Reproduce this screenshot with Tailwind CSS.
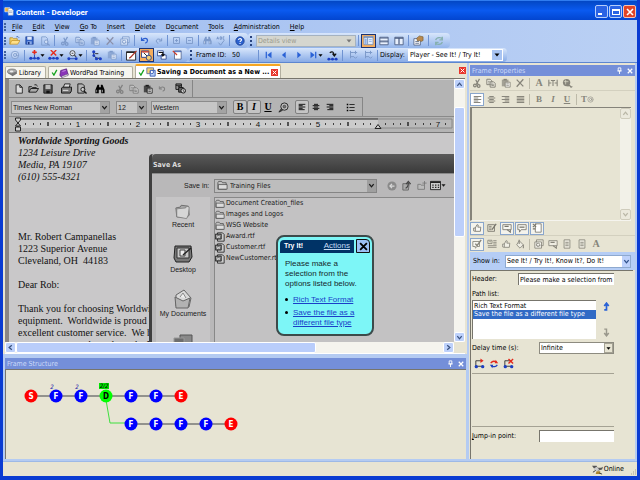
<!DOCTYPE html>
<html lang="en">
<head>
    <meta charset="UTF-8">
    <meta name="viewport" content="width=device-width, initial-scale=1.0">
    <title>Content - Developer</title>
    <script src="https://cdn.jsdelivr.net/npm/@tailwindcss/browser@4"></script>
</head>
<body class="h-screen flex flex-col overflow-hidden border-x-3 border-b-4 border-[#0a3bd2] bg-[#b4cbf2] font-['DejaVu_Sans_Condensed','DejaVu_Sans',sans-serif] text-[7px] leading-[10px] text-black">

    <!-- icon sprite -->
    <svg class="hidden" xmlns="http://www.w3.org/2000/svg">
        <symbol id="folder-open" viewBox="0 0 12 12"><path d="M1 10V3h3l1 1h4v2" fill="#f5d36b" stroke="#b58a1e" stroke-width=".8"/><path d="M1 10l2-4h9l-2.500 4z" fill="#ffe08a" stroke="#c29227" stroke-width=".8"/><path d="M8 2q2-1 3 1" fill="none" stroke="#3b66b5"/></symbol>
        <symbol id="save" viewBox="0 0 12 12"><path d="M1 1h10v10H1z" fill="#2f5fc4" stroke="#1b3c8c" stroke-width=".8"/><path d="M3 1h6v4H3z" fill="#dfe9fb"/><path d="M3 7h6v4H3z" fill="#8aa9e6"/><path d="M4 8h2v3H4z" fill="#16307a"/></symbol>
        <symbol id="find-doc" viewBox="0 0 12 12"><path d="M2 1h5l2 2v8H2z" fill="none" stroke="currentColor"/><circle cx="7.500" cy="7" r="2.200" fill="#ffffff60" stroke="currentColor"/><path d="M9 9l2.500 2.500" stroke="currentColor" stroke-width="1.500"/></symbol>
        <symbol id="cut" viewBox="0 0 12 12"><g fill="none" stroke="currentColor" stroke-width="1.500"><path d="M9 1L5 8M4.500 2l3 6"/><circle cx="3.500" cy="9" r="1.600"/><circle cx="8" cy="9.500" r="1.600"/></g></symbol>
        <symbol id="copy" viewBox="0 0 12 12"><g fill="#ffffff50" stroke="currentColor" stroke-width="1.200"><path d="M1 1.500h4l2 2v4.500H1z"/><path d="M5 4.500h4l2 2v4.500H5z"/></g><path d="M6.500 7.500h3M6.500 9h3M2.500 4h2M2.500 6h2" stroke="currentColor"/></symbol>
        <symbol id="paste" viewBox="0 0 12 12"><path d="M1 2h8v8H1z" fill="currentColor" opacity=".7"/><path d="M3 1h4v2H3z" fill="currentColor"/><path d="M5 5h6v6H5z" fill="#ffffffb0" stroke="currentColor"/><path d="M6.500 7h3M6.500 9h3" stroke="currentColor" stroke-width=".7"/></symbol>
        <symbol id="cross" viewBox="0 0 12 12"><path d="M2 2l8 8M10 1.500L2 10.500" fill="none" stroke="currentColor" stroke-width="1.500"/></symbol>
        <symbol id="stack" viewBox="0 0 12 12"><path d="M3 1h8v7H3z" fill="#ffffff40" stroke="currentColor"/><path d="M1 3.500h8v7.500H1z" fill="#ffffff80" stroke="currentColor"/><circle cx="5" cy="7" r="2" fill="none" stroke="currentColor"/></symbol>
        <symbol id="undo" viewBox="0 0 12 12"><path d="M2 2v4h4" fill="none" stroke="currentColor" stroke-width="1.500"/><path d="M2.500 5.500C5 2 10 2.500 10 6c0 2-1.500 3-3 3.500" fill="none" stroke="currentColor" stroke-width="1.600"/></symbol>
        <symbol id="redo" viewBox="0 0 12 12"><path d="M10 2v4H6M9.500 5.500C7 2 2 2.500 2 6c0 2 1.500 3 3 3.500" fill="none" stroke="currentColor" stroke-width="1.500"/></symbol>
        <symbol id="plus-box" viewBox="0 0 12 12"><path d="M2 2h8v8H2zM4 6h4M6 4v4" fill="none" stroke="currentColor" stroke-width="1.200"/></symbol>
        <symbol id="minus-box" viewBox="0 0 12 12"><path d="M2 2h8v8H2zM4 6h4" fill="none" stroke="currentColor" stroke-width="1.200"/></symbol>
        <symbol id="binoculars" viewBox="0 0 12 12"><path d="M3 1h2v3h2V1h2l2.500 6v4H7.500V7h-3v4H.5V7z" fill="currentColor"/><path d="M2 7v3M9 7v3" stroke="#fff" stroke-width=".6"/></symbol>
        <symbol id="spelling" viewBox="0 0 12 12"><path d="M1 4l1-3 1 3M1.300 3h1.500M5 1v3h1.500V1zM10 1H8.500v3H10M3 8l2.500 3L10 5" fill="none" stroke="currentColor" stroke-width="1.200"/></symbol>
        <symbol id="help" viewBox="0 0 12 12"><circle cx="6" cy="6" r="5" fill="#2c62cf" stroke="#1b3f94"/><path d="M4.300 4.800C4.300 2.500 8 2.700 7.800 4.800 7.600 6 6 6 6 7.300M6 8.500v1.200" fill="none" stroke="#fff" stroke-width="1.300"/></symbol>
        <symbol id="pane-left" viewBox="0 0 12 12"><path d="M1 1.500h10v9H1z" fill="#e6effc" stroke="#8094b8"/><path d="M1 2.500h10" stroke="#5f7fb8"/><path d="M5 2v8" stroke="#8094b8"/><path d="M2 4h2v6H2z" fill="#8db0e8"/><path d="M6.500 5h3M6.500 7h3" stroke="#8db0e8"/></symbol>
        <symbol id="pane-rows" viewBox="0 0 12 12"><path d="M1 1.500h10v9H1z" fill="#e8f0fc" stroke="#46587e"/><path d="M1 2.500h10M1 6h10M1 7h10" stroke="#46587e"/></symbol>
        <symbol id="pane-cols" viewBox="0 0 12 12"><path d="M1 1.500h10v9H1z" fill="#e8f0fc" stroke="#46587e"/><path d="M1 2.500h10M6 2v8" stroke="#46587e" stroke-width="1.400"/></symbol>
        <symbol id="properties" viewBox="0 0 12 12"><path d="M1 4h7v7H1z" fill="#fff" stroke="#5b6b8c"/><path d="M2.500 7h4M2.500 9h4" stroke="#5b6b8c"/><path d="M4 3.500L7 1l4 1v4l-2 1-2-1-2 .5z" fill="#b98a4e" stroke="#6f5326" stroke-width=".6"/></symbol>
        <symbol id="refresh" viewBox="0 0 12 12"><path d="M2 5c1-4 7-4 8-1M10 1v3.500H6.500M10 7c-1 4-7 4-8 1M2 11V7.500h3.500" fill="none" stroke="currentColor" stroke-width="1.500"/></symbol>
        <symbol id="globe" viewBox="0 0 12 12"><circle cx="6" cy="6" r="4.500" fill="#ffffff40" stroke="currentColor"/><circle cx="6" cy="6" r="1.800" fill="none" stroke="currentColor"/><path d="M8 4v3q1 1 2-1" fill="none" stroke="currentColor"/></symbol>
        <symbol id="node-add" viewBox="0 0 12 12"><path d="M6 0v5M3.500 2.500h5" stroke="#e62b1b" stroke-width="1.800"/><path d="M2 9h8M6 5v3" stroke="#2346b5"/><circle cx="2" cy="9" r="1.700" fill="#1c3fc2"/><circle cx="6" cy="9" r="1.400" fill="#1c3fc2"/><circle cx="10" cy="9" r="1.700" fill="#1c3fc2"/></symbol>
        <symbol id="node-del" viewBox="0 0 12 12"><path d="M3 0l6 6M9 0L3 6" stroke="#e62b1b" stroke-width="1.500"/><path d="M2 9h8" stroke="#2346b5"/><circle cx="2" cy="9" r="1.700" fill="#1c3fc2"/><circle cx="6" cy="9" r="1.400" fill="#1c3fc2"/><circle cx="10" cy="9" r="1.700" fill="#1c3fc2"/></symbol>
        <symbol id="node-find" viewBox="0 0 12 12"><circle cx="6" cy="3.500" r="2.800" fill="#e8eefb" stroke="#444"/><path d="M5 3.500h2M8 5.500l2 2" stroke="#444" stroke-width="1.200"/><path d="M1 9.500h10" stroke="#2346b5"/><circle cx="2" cy="9.500" r="1.600" fill="#1c3fc2"/><circle cx="10" cy="9.500" r="1.600" fill="#1c3fc2"/></symbol>
        <symbol id="node-branch" viewBox="0 0 12 12"><path d="M3 2v4l3 3h4M3 2l2 2h3" fill="none" stroke="#222"/><circle cx="3" cy="2" r="1.700" fill="#1c3fc2"/><circle cx="3" cy="6" r="1.500" fill="#1c3fc2"/><circle cx="6" cy="9.500" r="1.700" fill="#1c3fc2"/><circle cx="10.200" cy="9.500" r="1.700" fill="#1c3fc2"/></symbol>
        <symbol id="edit" viewBox="0 0 12 12"><path d="M.5 2h10v9H.5z" fill="#fff" stroke="#222"/><path d="M.5 2.500h10" stroke="#222" stroke-width="1.500"/><path d="M11.500 1L5 8l-1.500 1" stroke="#b03426" stroke-width="1.400"/></symbol>
        <symbol id="frame-bubble" viewBox="0 0 12 12"><path d="M.5 1h8v7h-8z" fill="#fff" stroke="#27428d"/><path d="M.5 2h8" stroke="#d33b25" stroke-width="1.500"/><path d="M3 3l5 5" stroke="#222"/><circle cx="8.500" cy="8.500" r="2.800" fill="#f3cf73" stroke="#27428d"/></symbol>
        <symbol id="frame-arrow" viewBox="0 0 12 12"><path d="M.5 1h7v6h-7zM5 6h6v5H5z" fill="#fff" stroke="#27428d"/><path d="M2 3h5v3M5.500 5L7 7l2-2" fill="none" stroke="#111" stroke-width="1.300"/></symbol>
        <symbol id="frame-page" viewBox="0 0 12 12"><path d="M3 1h8v10H3z" fill="#fff" stroke="#56688f"/><path d="M1 1l5 5" stroke="#d33b25" stroke-width="1.500"/><path d="M3 2h8" stroke="#2b55b5"/></symbol>
        <symbol id="nav-first" viewBox="0 0 12 12"><path d="M2 2h1.500v8H2zM9 2v8L4 6z" fill="#2a62d6"/></symbol>
        <symbol id="nav-prev" viewBox="0 0 12 12"><path d="M8 2v8L3.500 6z" fill="#2a62d6"/></symbol>
        <symbol id="nav-next" viewBox="0 0 12 12"><path d="M4 2v8l4.500-4z" fill="#2a62d6"/></symbol>
        <symbol id="nav-last" viewBox="0 0 12 12"><path d="M8.500 2H10v8H8.500zM3 2v8l5-4z" fill="#2a62d6"/></symbol>
        <symbol id="node-jump" viewBox="0 0 12 12"><path d="M3 3q4-3 5 3M6 4l2 2.500L10 4" fill="none" stroke="#111" stroke-width="1.300"/><path d="M1 10h10" stroke="#2346b5"/><circle cx="2" cy="10" r="1.500" fill="#1c3fc2"/><circle cx="6" cy="10" r="1.500" fill="#1c3fc2"/><circle cx="10" cy="10" r="1.500" fill="#1c3fc2"/></symbol>
        <symbol id="tree" viewBox="0 0 12 12"><path d="M3 1v9M3 3h4M3 8h4M9 1v4M7 3h4M7 8l2 2 2-2" fill="none" stroke="currentColor" stroke-width="1.200"/></symbol>
        <symbol id="disk" viewBox="0 0 12 12"><ellipse cx="5.500" cy="5" rx="5" ry="2.800" fill="#aaa" stroke="#555" stroke-width=".6"/><path d="M1 6l5 4 5-3-1-2-5 2z" fill="#777"/><ellipse cx="5" cy="4.700" rx="2" ry="1" fill="#eee"/></symbol>
        <symbol id="online" viewBox="0 0 12 12"><path d="M0 2h5l1 2h4l2-1-1 3-4 1-4-1z" fill="#555"/><path d="M2 5l3-2 3 3-4 2z" fill="#ccc"/><path d="M5 8h4v3H4z" fill="#a9852f"/><path d="M1 9l3-2M8 10l3 1" stroke="#333"/></symbol>
        <symbol id="book" viewBox="0 0 12 12"><path d="M2 3l7-2 2 7-8 3-2-2z" fill="#8a35b8" stroke="#4b1673" stroke-width=".8"/><path d="M3 10l8-3v2l-7 2.500z" fill="#d9e8d5" stroke="#4b1673" stroke-width=".5"/><path d="M4 4l4-1" stroke="#d9a4f0"/></symbol>
        <symbol id="topic" viewBox="0 0 12 12"><path d="M1 1h8v7H1z" fill="#f5d274" stroke="#5a6e9c"/><path d="M5 4h6v7H5z" fill="#b9d1f7" stroke="#2a4fae"/><circle cx="7" cy="6" r="2" fill="#fff" stroke="#2a4fae"/></symbol>
        <symbol id="app" viewBox="0 0 12 12"><path d="M1 2h6l1 5H1z" fill="#f0b23c" stroke="#fff" stroke-width=".7"/><path d="M5 3h4l2 2v6H5z" fill="#fff" stroke="#8f9db8" stroke-width=".7"/><path d="M6 6h4M6 8h4" stroke="#8f9db8"/></symbol>
        <symbol id="check" viewBox="0 0 12 12"><path d="M2 6l3 4.500L10 1.500" fill="none" stroke="#14a31f" stroke-width="2.200"/></symbol>
        <symbol id="new" viewBox="0 0 12 12"><path d="M2.500 1h4.500l3 3v7H2.500zM7 1v3h3" fill="#dcdcdc" stroke="currentColor"/></symbol>
        <symbol id="open" viewBox="0 0 12 12"><path d="M1 10V4h3l1 1h4v1M1 10l2-4h8.500L9 10zM7 2q2-1 3.500 1.500" fill="#aaa" stroke="currentColor"/></symbol>
        <symbol id="save-dark" viewBox="0 0 12 12"><path d="M1 1h10v10H1z" fill="#555" stroke="#111"/><path d="M3 1h6v5H3z" fill="#bbb"/><path d="M4 8h4v3H4z" fill="#111"/></symbol>
        <symbol id="print" viewBox="0 0 12 12"><path d="M4 1h6l-1 4H2.500z" fill="#ddd" stroke="#222"/><path d="M.5 5.500L2 4.500h9.500v4L10 11H.5z" fill="#777" stroke="#111"/><path d="M2 8h6" stroke="#eee"/></symbol>
        <symbol id="datetime" viewBox="0 0 12 12"><path d="M1 1h6v6H1z" fill="#999" stroke="#111"/><path d="M1 2.500h6M3 4h3" stroke="#111"/><path d="M4 5h5v5H4z" fill="#666" stroke="#111"/><circle cx="9" cy="8.500" r="2.500" fill="#ddd" stroke="#111"/><path d="M9 7v2h1.500" fill="none" stroke="#111" stroke-width=".7"/></symbol>
        <symbol id="palette" viewBox="0 0 12 12"><circle cx="7" cy="5" r="4" fill="#bbb" stroke="#222"/><circle cx="7" cy="5" r="1.500" fill="#777" stroke="#222" stroke-width=".6"/><path d="M4 7l-3 4 4-2" fill="#555" stroke="#222"/></symbol>
        <symbol id="al" viewBox="0 0 12 12"><path d="M1 2h10M1 4h6M1 6h10M1 8h6M1 10h9" stroke="currentColor" stroke-width="1.300"/></symbol>
        <symbol id="ac" viewBox="0 0 12 12"><path d="M3 2h6M1 4h10M3 6h6M1 8h10M3 10h6" stroke="currentColor" stroke-width="1.300"/></symbol>
        <symbol id="ar" viewBox="0 0 12 12"><path d="M1 2h10M5 4h6M1 6h10M5 8h6M2 10h9" stroke="currentColor" stroke-width="1.300"/></symbol>
        <symbol id="aj" viewBox="0 0 12 12"><path d="M1 2h10M1 4h10M1 6h10M1 8h10M1 10h10" stroke="currentColor" stroke-width="1.300"/></symbol>
        <symbol id="bullets" viewBox="0 0 12 12"><path d="M1 2h2M1 6h2M1 10h2" stroke="currentColor" stroke-width="2"/><path d="M4.500 2h7M4.500 6h7M4.500 10h7" stroke="currentColor"/></symbol>
        <symbol id="bubble-list" viewBox="0 0 12 12"><path d="M1 1.500h5v4H1zM3 3h1v1" fill="none" stroke="currentColor"/><path d="M7.500 2h4M7.500 4h4M7.500 6h4M1 8h10.500M1 10h10.500" stroke="currentColor"/></symbol>
        <symbol id="folder" viewBox="0 0 12 12"><path d="M1 10V2.500l1-1h3l1 1.500h4V10z" fill="#c4c4c4" stroke="#444" stroke-width=".8"/><path d="M1.500 10V5h9.500v5z" fill="#dcdcdc" stroke="#444" stroke-width=".8"/></symbol>
        <symbol id="rtf" viewBox="0 0 12 12"><path d="M3 1h6l2 2v8H3z" fill="#ccc" stroke="#222"/><path d="M.5 2.500h7v6h-7z" fill="#777" stroke="#222"/><path d="M2 4l1 3 1-2 1 2 1-3" fill="none" stroke="#eee" stroke-width=".8"/></symbol>
        <symbol id="back" viewBox="0 0 12 12"><circle cx="6" cy="6" r="5.500" fill="#8a8a8a"/><path d="M9 6H3.500M6 3.500L3.500 6 6 8.500" fill="none" stroke="#d8d8d8" stroke-width="1.500"/></symbol>
        <symbol id="up-folder" viewBox="0 0 12 12"><path d="M2 4h7l-1 7H2z" fill="#aaa" stroke="#555" stroke-width=".8"/><path d="M5 9q3-1 3-6M5.500 4.500L8 1.500l2.500 3" fill="none" stroke="#444" stroke-width="1.300"/></symbol>
        <symbol id="new-folder" viewBox="0 0 12 12"><path d="M1 10V4h3l1 1h4v5z" fill="#bbb" stroke="#777"/><path d="M9 0v5M6.500 2.500h5" stroke="#777"/></symbol>
        <symbol id="views" viewBox="0 0 12 12"><path d="M.5 1.500h11v9H.5z" fill="#ccc" stroke="#222"/><path d="M.5 2.500h11" stroke="#222" stroke-width="1.500"/><path d="M2.500 5.500h1.500M5.500 5.500H7M8.500 5.500H10M2.500 8h1.500M5.500 8H7M8.500 8H10" stroke="#222" stroke-width="1.400"/></symbol>
        <symbol id="big-folder" viewBox="0 0 18 18"><path d="M2 15L1 5l5-1 1-2 8 1 1 10-3 3z" fill="#aaa" stroke="#666"/><path d="M2 15V6l10-1 1-2 3 1-1 9-2 4z" fill="#d6d6d6" stroke="#777" stroke-width=".8"/></symbol>
        <symbol id="desktop" viewBox="0 0 20 18"><path d="M2 1h16l1 11-3 5H3L1 13z" fill="#777" stroke="#222"/><path d="M4 3h12v10H4z" fill="#c8c8c8" stroke="#333"/><path d="M7 5h5v6H7z" fill="#eee" stroke="#444"/><path d="M10 10l8-7" stroke="#222" stroke-width="1.500"/></symbol>
        <symbol id="documents" viewBox="0 0 18 20"><path d="M2 6l8-5 7 8-2 9-13-1z" fill="#d9d9d9" stroke="#666"/><path d="M1 8l8 4 7-3-2 10H2z" fill="#b2b2b2" stroke="#666"/><path d="M6 8l3-4 3 5" fill="#eee" stroke="#888"/></symbol>
        <symbol id="computer" viewBox="0 0 20 18"><path d="M7 1h12v10H7z" fill="#888" stroke="#555"/><path d="M1 4h10v9H1z" fill="#6d6d6d" stroke="#999"/><path d="M1 14h18v3H1z" fill="#999"/></symbol>
        <symbol id="thumb" viewBox="0 0 12 12"><path d="M2 6h2l2-4 1.500.5L7 5h3.500l-.5 5H4L2 9.500z" fill="#ffffff70" stroke="currentColor"/><path d="M4 6v4" stroke="currentColor"/></symbol>
        <symbol id="note" viewBox="0 0 12 12"><path d="M1 2h8v8H1zM2.500 4h3M2.500 6h3M2.500 8h3" fill="none" stroke="currentColor"/><path d="M11 1L6 8" stroke="currentColor" stroke-width="1.500"/></symbol>
        <symbol id="screen" viewBox="0 0 12 12"><path d="M1 2h10v6H1z" fill="#ffffff50" stroke="currentColor"/><path d="M3 4h5M6 8l4 3V8" fill="none" stroke="currentColor" stroke-width="1.300"/></symbol>
        <symbol id="bubble" viewBox="0 0 12 12"><path d="M1 2h10v6H5l-2 3V8H1z" fill="#ffffff50" stroke="currentColor"/><path d="M3 5h6" stroke="currentColor" stroke-width="1.500"/></symbol>
        <symbol id="template" viewBox="0 0 12 12"><path d="M4 1h7v10H4z" fill="#fff" stroke="currentColor"/><path d="M1 1l4 4M5 1L1 5M1 7h3" stroke="currentColor" stroke-width="1.300"/></symbol>
        <symbol id="page" viewBox="0 0 12 12"><path d="M2.500 1h7v10h-7z" fill="#ffffff50" stroke="currentColor"/><path d="M4 4h4M4 6h4M4 8h4" stroke="currentColor"/></symbol>
        <symbol id="tag" viewBox="0 0 12 12"><path d="M1 3h8v6H6l-2 2V9H1z" fill="#ffffff50" stroke="currentColor"/><path d="M11 1L6 8 4 5.500" fill="none" stroke="currentColor" stroke-width="1.700"/></symbol>
        <symbol id="bucket" viewBox="0 0 12 12"><path d="M5 2l5 5-4 4-4-4z" fill="#ffffff50" stroke="currentColor"/><path d="M10 7v4M5 1v5" stroke="currentColor" stroke-width="1.300"/></symbol>
        <symbol id="spacing" viewBox="0 0 12 12"><path d="M1 2v8M11 2v8M3.500 3h5M6 3v6.500M1 6h3M8 6h3" fill="none" stroke="currentColor" stroke-width="1.300"/></symbol>
        <symbol id="link" viewBox="0 0 12 12"><circle cx="5" cy="5" r="4" fill="currentColor"/><path d="M2 4h5M4 2v5" stroke="#e7e4d3" stroke-width=".7"/><path d="M6 9q2-2 3 0t2 0" fill="none" stroke="currentColor" stroke-width="1.500"/></symbol>
        <symbol id="caret" viewBox="0 0 6 6"><path d="M.5 1.500h5L3 4.500z" fill="currentColor"/></symbol>
        <symbol id="chev" viewBox="0 0 8 8"><path d="M1.500 2.500L4 5.500l2.500-3" fill="none" stroke="currentColor" stroke-width="1.500"/></symbol>
        <symbol id="pin" viewBox="0 0 8 8"><path d="M2.500 1h3v3.500h-3zM1.500 4.500h5M4 4.500V8" fill="none" stroke="#fff"/></symbol>
        <symbol id="close" viewBox="0 0 8 8"><path d="M1 1l6 6M7 1L1 7" stroke="currentColor" stroke-width="1.600"/></symbol>
        <symbol id="route-add" viewBox="0 0 12 12"><path d="M2 9V3h6M1 9h9" fill="none" stroke="#333"/><path d="M7 .5L10.500 3 7 5.500z" fill="#e3281b"/><circle cx="2.500" cy="9.500" r="1.800" fill="#1c3fc2"/><circle cx="9.500" cy="9.500" r="1.800" fill="#1c3fc2"/></symbol>
        <symbol id="route-swap" viewBox="0 0 12 12"><path d="M2 5q3-4 7-1" fill="none" stroke="#e3281b" stroke-width="1.500"/><path d="M10 7q-3 4-7 1" fill="none" stroke="#1c3fc2" stroke-width="1.500"/><path d="M8 1l3 4H7z" fill="#e3281b"/><path d="M4 11L1 7h4z" fill="#1c3fc2"/></symbol>
        <symbol id="route-del" viewBox="0 0 12 12"><path d="M2 9V3h6M1 9h9" fill="none" stroke="#333"/><path d="M6 1l5 5M11 1L6 6" stroke="#e3281b" stroke-width="1.500"/><circle cx="2.500" cy="9.500" r="1.800" fill="#1c3fc2"/><circle cx="9.500" cy="9.500" r="1.800" fill="#1c3fc2"/></symbol>
    </svg>

    <header class="h-5 shrink-0 -mx-[3px] pl-1 pr-1 flex items-center gap-0.5 bg-linear-to-b from-[#0347c4] via-[#0a5af0] via-50% to-[#0345cf] border-t border-[#2f7cf0]">
        <svg class="size-[10px]"><use href="#app"/></svg>
        <h1 class="flex-1 text-white text-[8px] font-bold font-['Roboto',sans-serif] pt-1">Content - Developer</h1>
        <div class="flex gap-px pt-0.5">
            <button aria-label="Minimize" class="size-[13px] rounded-xs border border-[#b5cdfa] bg-[#2a63e4] flex items-end p-0.5"><span class="w-1 h-0.5 bg-white"></span></button>
            <button aria-label="Maximize" class="size-[13px] rounded-xs border border-[#b5cdfa] bg-[#2a63e4] flex items-center justify-center"><span class="w-2 h-1.5 border border-t-2 border-white"></span></button>
            <button aria-label="Close" class="size-[13px] rounded-xs border border-[#f5c3b5] bg-[#e14427] flex items-center justify-center text-white"><svg class="size-2"><use href="#close"/></svg></button>
        </div>
    </header>

    <nav class="h-[13px] shrink-0 flex items-center gap-[10px] pl-px bg-linear-to-r from-[#a0bdf0] to-[#bad0f4]">
        <span class="h-2 border-l-2 border-dotted border-[#41619e] -mr-1"></span>
        <a href="#"><u>F</u>ile</a>
        <a href="#"><u>E</u>dit</a>
        <a href="#"><u>V</u>iew</a>
        <a href="#"><u>G</u>o To</a>
        <a href="#"><u>I</u>nsert</a>
        <a href="#"><u>D</u>elete</a>
        <a href="#">D<u>o</u>cument</a>
        <a href="#"><u>T</u>ools</a>
        <a href="#"><u>A</u>dministration</a>
        <a href="#"><u>H</u>elp</a>
    </nav>

    <div class="h-[15px] shrink-0 flex bg-linear-to-r from-[#a0bdf0] to-[#bad0f4] text-[#7d9aca]">
        <div class="flex items-center rounded-r-sm pl-px bg-linear-to-b from-[#d8e6fb] to-[#93b4ea] pr-px">
            <span class="h-2 border-l-2 border-dotted border-[#41619e] mr-px"></span>
            <button aria-label="Open" class="w-[15px] flex justify-center"><svg class="size-[11px]"><use href="#folder-open"/></svg></button>
            <button aria-label="Save" class="w-[15px] flex justify-center"><svg class="size-[9px]"><use href="#save"/></svg></button>
            <button aria-label="Preview" class="w-[15px] flex justify-center"><svg class="size-[10px]"><use href="#find-doc"/></svg></button>
            <span class="w-px h-[11px] bg-[#6f93d2] mx-0.5"></span>
            <button aria-label="Cut" class="w-[15px] flex justify-center"><svg class="size-[10px]"><use href="#cut"/></svg></button>
            <button aria-label="Copy" class="w-[15px] flex justify-center"><svg class="size-[10px]"><use href="#copy"/></svg></button>
            <button aria-label="Paste" class="w-[15px] flex justify-center"><svg class="size-[10px]"><use href="#paste"/></svg></button>
            <button aria-label="Delete" class="w-[15px] flex justify-center text-[#8b8fa8]"><svg class="size-[10px]"><use href="#cross"/></svg></button>
            <button aria-label="Details" class="w-[15px] flex justify-center"><svg class="size-[10px]"><use href="#stack"/></svg></button>
            <span class="w-px h-[11px] bg-[#6f93d2] mx-0.5"></span>
            <button aria-label="Undo" class="w-[15px] flex justify-center text-[#2c5fd0]"><svg class="size-[9px]"><use href="#undo"/></svg></button>
            <button aria-label="Redo" class="w-[13px] flex justify-center"><svg class="size-2"><use href="#redo"/></svg></button>
            <span class="w-px h-[11px] bg-[#6f93d2] mx-0.5"></span>
            <button aria-label="Expand" class="w-[13px] flex justify-center"><svg class="size-[9px]"><use href="#plus-box"/></svg></button>
            <button aria-label="Collapse" class="w-[13px] flex justify-center"><svg class="size-[9px]"><use href="#minus-box"/></svg></button>
            <span class="w-px h-[11px] bg-[#6f93d2] mx-0.5"></span>
            <button aria-label="Find" class="w-[13px] flex justify-center"><svg class="size-[9px]"><use href="#binoculars"/></svg></button>
            <button aria-label="Spelling" class="w-[13px] flex justify-center"><svg class="size-[10px]"><use href="#spelling"/></svg></button>
            <span class="w-px h-[11px] bg-[#6f93d2] mx-0.5"></span>
            <button aria-label="Help" class="w-[15px] flex justify-center"><svg class="size-[10px]"><use href="#help"/></svg></button>
        </div>
        <div class="flex items-center rounded-sm bg-linear-to-b from-[#d8e6fb] to-[#93b4ea] pl-0.5 pr-1">
            <span class="h-2.5 border-l-2 border-dotted border-[#27427e] mr-1"></span>
            <div class="relative w-[100px] h-3">
                <select aria-label="View" disabled class="appearance-none block w-full h-full pl-px bg-[#d5d6cf] border border-[#a5b2c0] text-[#9a9a8c] leading-[10px] opacity-100"><option>Details view</option></select>
                <svg class="absolute right-1 top-[3px] size-1.5 text-[#777] pointer-events-none"><use href="#caret"/></svg>
            </div>
            <span class="w-px h-[11px] bg-[#6f93d2] mx-0.5"></span>
            <button aria-label="Left pane" class="w-[15px] h-[14px] flex justify-center items-center border border-[#1d3474] bg-[#f5ad5c]"><svg class="size-[11px]"><use href="#pane-left"/></svg></button>
            <button aria-label="Rows" class="w-[15px] flex justify-center"><svg class="size-[10px]"><use href="#pane-rows"/></svg></button>
            <button aria-label="Columns" class="w-[15px] flex justify-center"><svg class="size-[10px]"><use href="#pane-cols"/></svg></button>
            <span class="w-px h-[11px] bg-[#6f93d2] mx-0.5"></span>
            <button aria-label="Properties" class="w-[15px] flex justify-center"><svg class="size-[11px]"><use href="#properties"/></svg></button>
            <span class="w-px h-[11px] bg-[#6f93d2] mx-0.5"></span>
            <button aria-label="Refresh" class="w-[15px] flex justify-center text-[#86b0ae]"><svg class="size-[10px]"><use href="#refresh"/></svg></button>
        </div>
    </div>

    <div class="h-[15px] shrink-0 flex bg-linear-to-r from-[#a0bdf0] to-[#bad0f4] border-b border-[#5d86cf] text-[#7d9aca]">
        <div class="flex items-center rounded-r-sm pl-px bg-linear-to-b from-[#d8e6fb] to-[#88abe6] pr-1">
            <span class="h-2 border-l-2 border-dotted border-[#41619e] mr-px"></span>
            <button aria-label="Publish" class="w-[15px] flex justify-center"><svg class="size-[10px]"><use href="#globe"/></svg></button>
            <span class="w-px h-[11px] bg-[#6f93d2] mx-0.5"></span>
            <button aria-label="Insert frame" class="w-[19px] flex items-center justify-center text-black"><svg class="size-[11px]"><use href="#node-add"/></svg><svg class="size-[5px]"><use href="#caret"/></svg></button>
            <button aria-label="Delete frame" class="w-[19px] flex items-center justify-center text-black"><svg class="size-[11px]"><use href="#node-del"/></svg><svg class="size-[5px]"><use href="#caret"/></svg></button>
            <button aria-label="Find frame" class="w-[19px] flex items-center justify-center text-black"><svg class="size-[11px]"><use href="#node-find"/></svg><svg class="size-[5px]"><use href="#caret"/></svg></button>
            <span class="w-px h-[11px] bg-[#6f93d2] mx-0.5"></span>
            <button aria-label="Link frames" class="w-[15px] flex justify-center"><svg class="size-[11px]"><use href="#node-branch"/></svg></button>
            <button aria-label="Recapture" class="w-[15px] flex justify-center"><svg class="size-[10px]"><use href="#paste"/></svg></button>
            <span class="w-px h-[11px] bg-[#6f93d2] mx-0.5"></span>
            <button aria-label="Edit screenshot" class="w-[15px] flex justify-center"><svg class="size-[11px]"><use href="#edit"/></svg></button>
            <button aria-label="Bubble view" class="w-[15px] h-[14px] flex justify-center items-center border border-[#1d3474] bg-[#f5ad5c]"><svg class="size-[11px]"><use href="#frame-bubble"/></svg></button>
            <button aria-label="Action view" class="w-[15px] flex justify-center"><svg class="size-[10px]"><use href="#frame-arrow"/></svg></button>
            <button aria-label="Page view" class="w-[15px] flex justify-center"><svg class="size-[10px]"><use href="#frame-page"/></svg></button>
        </div>
        <div class="flex items-center rounded-sm bg-linear-to-b from-[#d8e6fb] to-[#88abe6] pl-0.5 pr-1 text-black">
            <span class="h-2.5 border-l-2 border-dotted border-[#27427e] mr-1"></span>
            <label for="frameId" class="w-9">Frame ID:</label>
            <input id="frameId" type="text" value="50" class="w-6 bg-transparent">
            <span class="w-px h-[11px] bg-[#6f93d2] mx-0.5"></span>
            <button aria-label="First" class="w-[15px] flex justify-center"><svg class="size-[10px]"><use href="#nav-first"/></svg></button>
            <button aria-label="Previous" class="w-[15px] flex justify-center"><svg class="size-[10px]"><use href="#nav-prev"/></svg></button>
            <button aria-label="Next" class="w-[15px] flex justify-center"><svg class="size-[10px]"><use href="#nav-next"/></svg></button>
            <button aria-label="Last" class="w-[19px] flex items-center justify-center"><svg class="size-[10px]"><use href="#nav-last"/></svg><svg class="size-[5px]"><use href="#caret"/></svg></button>
            <button aria-label="Jump" class="w-[15px] flex justify-center"><svg class="size-[11px]"><use href="#node-jump"/></svg></button>
            <span class="w-px h-[11px] bg-[#6f93d2] mx-0.5"></span>
            <button aria-label="Branch left" class="w-[15px] flex justify-center text-[#7d9aca]"><svg class="size-[10px]"><use href="#tree"/></svg></button>
            <button aria-label="Branch right" class="w-[15px] flex justify-center text-[#7d9aca]"><svg class="size-[10px]"><use href="#tree"/></svg></button>
            <span class="w-px h-[11px] bg-[#6f93d2] mx-0.5"></span>
            <label for="display" class="w-7">Display:</label>
            <div class="relative w-[95px] h-[12px]">
                <select id="display" class="appearance-none block w-full h-full pl-0.5 bg-white leading-[10px]"><option>Player - See It! / Try It!</option></select>
                <span class="absolute right-px top-px size-2.5 bg-[#a9c4f2] flex items-center justify-center pointer-events-none"><svg class="size-1.5"><use href="#caret"/></svg></span>
            </div>
        </div>
    </div>

    <main class="flex-1 min-h-0 flex gap-0.5 pr-0.5 pb-0.5">
        <div class="flex-1 min-w-0 flex flex-col gap-1">
            <section class="flex-1 min-h-0 flex flex-col bg-[#e7e4d3]">
                <div class="h-[15px] shrink-0 flex items-end gap-0.5 pl-0.5 pr-px">
                    <button class="h-3 w-[41px] flex items-center gap-px pl-px rounded-t-xs border border-b-0 border-[#b3b0a0] bg-[#f7f6f0]"><svg class="size-[11px]"><use href="#disk"/></svg>Library</button>
                    <button class="h-3 w-[85px] flex items-center gap-px pl-0.5 rounded-t-xs border border-b-0 border-[#b3b0a0] bg-[#f7f6f0] whitespace-nowrap"><svg class="size-[7px]"><use href="#check"/></svg><svg class="size-[10px]"><use href="#book"/></svg>WordPad Training</button>
                    <div class="h-[14px] w-[146px] flex items-center gap-px pl-0.5 pr-0.5 rounded-t-xs border border-b-0 border-t-2 border-[#b3b0a0] border-t-[#f5a623] bg-white font-bold whitespace-nowrap">
                        <svg class="size-[7px] shrink-0"><use href="#check"/></svg><svg class="size-[10px] shrink-0"><use href="#topic"/></svg>
                        <span class="flex-1">Saving a Document as a New ...</span>
                        <button aria-label="Close tab" class="size-[7px] bg-[#e8352b] text-white p-px"><svg class="size-[5px]"><use href="#close"/></svg></button>
                    </div>
                    <button aria-label="Close document" class="size-[7px] ml-auto mb-1 bg-[#e8352b] text-white p-px"><svg class="size-[5px]"><use href="#close"/></svg></button>
                </div>

                <div class="flex-1 min-h-0 flex flex-col ml-0.5 mr-0.5 border-t border-[#77756c]">
                    <div class="flex-1 min-h-0 flex">
                        <!-- captured WordPad screen -->
                        <div class="relative flex-1 min-w-0 overflow-hidden flex flex-col border-l-4 border-[#8a8684] bg-[#b4b4b4] font-['Liberation_Sans',sans-serif] text-[7px] text-[#1a1a1a]">
                            <div class="h-[18px] shrink-0 flex items-center pl-0.5 border-t border-[#d0d0d0]">
                                <button aria-label="New" class="w-[15px] flex justify-center"><svg class="size-[10px]"><use href="#new"/></svg></button>
                                <button aria-label="Open file" class="w-[14px] flex justify-center"><svg class="size-[11px]"><use href="#open"/></svg></button>
                                <button aria-label="Save file" class="w-[15px] flex justify-center"><svg class="size-[10px]"><use href="#save-dark"/></svg></button>
                                <button aria-label="Print" class="w-[15px] ml-1 flex justify-center"><svg class="size-[11px]"><use href="#print"/></svg></button>
                                <button aria-label="Print preview" class="w-[14px] flex justify-center"><svg class="size-[11px]"><use href="#find-doc"/></svg></button>
                                <button aria-label="Find text" class="w-[15px] ml-1 flex justify-center text-black"><svg class="size-[10px]"><use href="#binoculars"/></svg></button>
                                <button aria-label="Cut text" class="w-[14px] ml-1.5 flex justify-center text-[#808080]"><svg class="size-[10px]"><use href="#cut"/></svg></button>
                                <button aria-label="Copy text" class="w-[14px] flex justify-center text-[#808080]"><svg class="size-[10px]"><use href="#copy"/></svg></button>
                                <button aria-label="Paste text" class="w-[14px] flex justify-center"><svg class="size-[10px]"><use href="#paste"/></svg></button>
                                <button aria-label="Undo edit" class="w-[14px] flex justify-center text-[#808080]"><svg class="size-2"><use href="#undo"/></svg></button>
                                <button aria-label="Date and time" class="w-[15px] ml-1 flex justify-center"><svg class="size-[11px]"><use href="#datetime"/></svg></button>
                                <span class="self-stretch ml-1 w-px bg-[#868686]"></span>
                            </div>
                            <div class="h-[19px] w-[354px] shrink-0 flex items-center pl-0.5 border-t border-r border-[#868686]">
                                <div class="relative w-[99px] h-[13px]">
                                    <select aria-label="Font" class="appearance-none block w-full h-full pl-px bg-[#c6c6c6] border border-[#8b8b8b] leading-[11px]"><option>Times New Roman</option></select>
                                    <span class="absolute right-px top-px w-[9px] h-[11px] bg-[#a3a3a3] flex items-center justify-center pointer-events-none"><svg class="size-[7px]"><use href="#chev"/></svg></span>
                                </div>
                                <div class="relative w-[31px] h-[13px] ml-1.5">
                                    <select aria-label="Font size" class="appearance-none block w-full h-full pl-px bg-[#c6c6c6] border border-[#8b8b8b] leading-[11px]"><option>12</option></select>
                                    <span class="absolute right-px top-px w-[9px] h-[11px] bg-[#a3a3a3] flex items-center justify-center pointer-events-none"><svg class="size-[7px]"><use href="#chev"/></svg></span>
                                </div>
                                <div class="relative w-[76px] h-[13px] ml-1">
                                    <select aria-label="Script" class="appearance-none block w-full h-full pl-px bg-[#c6c6c6] border border-[#8b8b8b] leading-[11px]"><option>Western</option></select>
                                    <span class="absolute right-px top-px w-[9px] h-[11px] bg-[#a3a3a3] flex items-center justify-center pointer-events-none"><svg class="size-[7px]"><use href="#chev"/></svg></span>
                                </div>
                                <div class="flex items-center pl-1.5 font-['Liberation_Serif',serif] text-[10px] text-black">
                                    <button class="size-[14px] rounded-xs border border-[#808080] bg-[#c4c4c4] font-bold">B</button>
                                    <button class="size-[14px] rounded-xs border border-[#808080] bg-[#c4c4c4] font-bold italic">I</button>
                                    <button class="w-[14px] font-bold underline">U</button>
                                    <button aria-label="Color" class="w-4 flex justify-center"><svg class="size-[11px]"><use href="#palette"/></svg></button>
                                    <button aria-label="Left" class="size-[14px] ml-1 flex items-center justify-center rounded-xs border border-[#808080] bg-[#c4c4c4]"><svg class="size-2"><use href="#al"/></svg></button>
                                    <button aria-label="Center" class="w-[14px] flex justify-center"><svg class="size-2"><use href="#ac"/></svg></button>
                                    <button aria-label="Right" class="w-[14px] flex justify-center"><svg class="size-2"><use href="#ar"/></svg></button>
                                    <button aria-label="Bullets" class="w-[14px] ml-1.5 flex justify-center"><svg class="size-[9px]"><use href="#bullets"/></svg></button>
                                </div>
                            </div>
                            <svg class="h-4 w-full shrink-0 border-t border-[#8a8a8a]" font-family="Liberation Sans" font-size="8" text-anchor="middle">
                                <defs>
                                    <pattern id="ticks" x="9" y="0" width="60" height="12" patternUnits="userSpaceOnUse">
                                        <path d="M7 7h1M15 7h1M22 7h1M37 7h1M45 7h1M52 7h1M30 5v4" stroke="#111" stroke-width="1.300"/>
                                    </pattern>
                                </defs>
                                <path d="M9 2h360v9H9z" fill="#cbcbcb"/>
                                <path d="M9 11V2h360" fill="none" stroke="#222"/>
                                <path d="M369 2h74v9h-74" fill="#b9b9b9" stroke="#888"/>
                                <path d="M10 0h432v12H10z" fill="url(#ticks)"/>
                                <g fill="#111"><text x="69" y="10">1</text><text x="129" y="10">2</text><text x="189" y="10">3</text><text x="249" y="10">4</text><text x="309" y="10">5</text><text x="429" y="10">7</text></g>
                                <path d="M6.500 1h5v2L9 6 6.500 3zM9 6l2.500 3h-5zM6.500 10h5v4h-5z" fill="#ccc" stroke="#222"/>
                                <path d="M366 11.500l3-4 3 4z" fill="#ccc" stroke="#222"/>
                            </svg>
                            <div class="flex-1 min-h-0 overflow-hidden pl-[9px] pt-0.5 border-t border-[#777] bg-[#c9c8c9] font-['Liberation_Serif',serif] text-[10px] leading-[12px] text-[#111] [&>p]:whitespace-pre">
                                <p class="italic font-bold">Worldwide Sporting Goods</p>
                                <p class="italic">1234 Leisure Drive</p>
                                <p class="italic">Media, PA 19107</p>
                                <p class="italic">(610) 555-4321</p>
                                <p class="mt-12">Mr. Robert Campanellas</p>
                                <p>1223 Superior Avenue</p>
                                <p>Cleveland, OH  44183</p>
                                <p class="mt-3">Dear Rob:</p>
                                <p class="mt-3">Thank you for choosing Worldwide</p>
                                <p>equipment.  Worldwide is proud of</p>
                                <p>excellent customer service.  We have</p>
                                <p>many customers throughout the United</p>
                            </div>

                            <!-- Save As dialog lies over the letter -->
                            <div class="absolute left-[140px] top-[75px] -right-5 -bottom-5 flex flex-col rounded-tl-sm border-l-3 border-[#3f3f3f] bg-[#b9b8b9]">
                                <h2 class="h-[19px] shrink-0 pl-px pt-1.5 bg-linear-to-b from-[#5a5a5a] to-[#3a3a3a] text-[#dcdcdc] font-bold font-['DejaVu_Sans_Condensed',sans-serif] rounded-tl-sm leading-[10px]">Save As</h2>
                                <div class="h-6 shrink-0 flex items-center pl-8 border-t border-[#888]">
                                    <label for="saveIn" class="w-[30px]">Save in:</label>
                                    <div class="relative w-[163px] h-[14px]">
                                        <select id="saveIn" class="appearance-none block w-full h-full pl-[15px] bg-[#bdbdbd] border border-[#858585] font-['DejaVu_Sans_Condensed',sans-serif]"><option>Training Files</option></select>
                                        <svg class="absolute left-[3px] top-px size-[11px] pointer-events-none"><use href="#folder"/></svg>
                                        <span class="absolute right-px top-px w-[9px] h-3 bg-[#9f9f9f] flex items-center justify-center pointer-events-none"><svg class="size-[7px]"><use href="#chev"/></svg></span>
                                    </div>
                                    <button aria-label="Back" class="ml-2 w-[14px] flex justify-center"><svg class="size-[10px]"><use href="#back"/></svg></button>
                                    <button aria-label="Up" class="w-[15px] flex justify-center"><svg class="size-[11px]"><use href="#up-folder"/></svg></button>
                                    <button aria-label="New folder" class="w-[15px] flex justify-center"><svg class="size-[10px]"><use href="#new-folder"/></svg></button>
                                    <button aria-label="Views" class="w-[18px] flex items-center justify-center"><svg class="size-[11px]"><use href="#views"/></svg><svg class="size-[5px]"><use href="#caret"/></svg></button>
                                </div>
                                <div class="flex-1 min-h-0 flex gap-1 pl-1">
                                    <div class="w-[54px] shrink-0 flex flex-col items-center pt-1.5 bg-[#c6c5c6]">
                                        <svg class="w-4 h-[17px]"><use href="#big-folder"/></svg><span>Recent</span>
                                        <svg class="w-5 h-[18px] mt-[15px]"><use href="#desktop"/></svg><span class="mt-0.5">Desktop</span>
                                        <svg class="w-[18px] h-5 mt-[14px]"><use href="#documents"/></svg><span class="whitespace-nowrap">My Documents</span>
                                        <svg class="w-5 h-[18px] mt-[15px] shrink-0"><use href="#computer"/></svg>
                                    </div>
                                    <ul class="flex-1 border-l border-t border-[#888] bg-[#c3c2c3] leading-[11px] font-['DejaVu_Sans_Condensed',sans-serif] [&>li]:flex [&>li]:items-center [&>li]:h-[11px] [&>li]:gap-px">
                                        <li><svg class="size-[10px]"><use href="#folder"/></svg>Document Creation_files</li>
                                        <li><svg class="size-[10px]"><use href="#folder"/></svg>Images and Logos</li>
                                        <li><svg class="size-[10px]"><use href="#folder"/></svg>WSG Website</li>
                                        <li><svg class="size-[10px]"><use href="#rtf"/></svg>Award.rtf</li>
                                        <li><svg class="size-[10px]"><use href="#rtf"/></svg>Customer.rtf</li>
                                        <li><svg class="size-[10px]"><use href="#rtf"/></svg>NewCustomer.rtf</li>
                                    </ul>
                                </div>
                            </div>

                            <!-- Try It! bubble -->
                            <div class="absolute left-[267px] top-[156px] w-[98px] h-[101px] rounded-lg border-2 border-[#3c4a4a] bg-[#7df6f7] p-0.5 text-[8px] leading-[10px] text-[#16282c]">
                                <div class="flex gap-0.5 items-center">
                                    <div class="flex-1 h-[13px] flex items-center justify-between pl-1 pr-1 bg-[#003366] text-white rounded-tl-sm"><b class="text-[7px]">Try It!</b><a href="#" class="underline text-[#c7dcf5]">Actions</a></div>
                                    <button aria-label="Close bubble" class="size-[14px] rounded-tr-sm border border-[#111] bg-[#9cc0f5] flex items-center justify-center text-black"><svg class="size-[9px]"><use href="#close"/></svg></button>
                                </div>
                                <p class="pl-[5px] pt-1.5">Please make a<br>selection from the<br>options listed below.</p>
                                <ul class="pl-[5px] pt-1.5 text-[#1a3fc9] [&>li]:flex [&>li]:gap-[5px]">
                                    <li><span class="size-[3px] mt-[3px] rounded-full bg-black"></span><a href="#" class="underline">Rich Text Format</a></li>
                                    <li class="mt-[3px]"><span class="size-[3px] mt-[3px] rounded-full bg-black"></span><a href="#" class="underline">Save the file as a<br>different file type</a></li>
                                </ul>
                            </div>
                        </div>
                        <div class="w-[11px] shrink-0 flex flex-col bg-[#f5f4ee]">
                            <button aria-label="Scroll up" class="h-[10px] flex items-center justify-center rounded-xs bg-[#bdd1fb] border border-white text-[#3b5380]"><svg class="size-[7px] rotate-180"><use href="#chev"/></svg></button>
                            <div class="mt-[18px] h-[130px] rounded-xs border border-white bg-[#bccffa]"></div>
                            <button aria-label="Scroll down" class="mt-auto h-[10px] flex items-center justify-center rounded-xs bg-[#bdd1fb] border border-white text-[#3b5380]"><svg class="size-[7px]"><use href="#chev"/></svg></button>
                        </div>
                    </div>
                    <div class="h-[11px] shrink-0 flex bg-[#f5f4ee] mr-[11px]">
                        <button aria-label="Scroll left" class="w-[11px] flex items-center justify-center rounded-xs bg-[#bdd1fb] border border-white text-[#3b5380]"><svg class="size-[7px] rotate-90"><use href="#chev"/></svg></button>
                        <div class="w-[300px] rounded-xs border border-white bg-[#b9cdfb]"></div>
                        <button aria-label="Scroll right" class="ml-auto w-[11px] flex items-center justify-center rounded-xs bg-[#bdd1fb] border border-white text-[#3b5380]"><svg class="size-[7px] -rotate-90"><use href="#chev"/></svg></button>
                    </div>
                    <div class="h-px shrink-0 bg-white"></div>
                </div>
            </section>

            <section class="h-[101px] shrink-0 flex flex-col ml-0.5 mr-px bg-[#e7e4d3]">
                <h2 class="h-[11px] shrink-0 flex items-center px-0.5 gap-1 bg-[#748fd9] text-[#cbd9f8]"><span class="flex-1">Frame Structure</span><svg class="size-[7px]"><use href="#pin"/></svg><svg class="size-[6px] text-white"><use href="#close"/></svg></h2>
                <svg class="flex-1 w-full border-l border-t border-[#77756c]" id="structure" font-family="DejaVu Sans Condensed" font-size="8" font-weight="bold" text-anchor="middle">
                    <path d="M25 26h150M125 54h100" stroke="#777" stroke-width="1.500"/>
                    <path d="M100 30l4 23h21" fill="none" stroke="#3ee03e"/>
                    <path d="M93 13h10v6H93z" fill="#00e400"/>
                    <g font-size="6" font-style="italic" font-weight="normal"><text x="46" y="19" fill="#22a">2</text><text x="71" y="19" fill="#22a">2</text><text x="98" y="18" fill="#000">2/2</text></g>
                </svg>
            </section>
        </div>

        <aside class="w-[166px] shrink-0 flex flex-col pt-0.5 pl-px bg-[#e7e4d3] text-[#86847a]">
            <h2 class="h-[11px] shrink-0 flex items-center px-0.5 gap-1 bg-[#748fd9] text-[#cbd9f8]"><span class="flex-1">Frame Properties</span><svg class="size-[7px]"><use href="#pin"/></svg><svg class="size-[6px] text-white"><use href="#close"/></svg></h2>
            <div class="h-[15px] shrink-0 flex items-center border-b border-[#d3d0bf]">
                <button aria-label="Cut bubble text" class="w-[14px] flex justify-center"><svg class="size-[10px]"><use href="#cut"/></svg></button>
                <button aria-label="Copy bubble text" class="w-[14px] flex justify-center"><svg class="size-[10px]"><use href="#copy"/></svg></button>
                <button aria-label="Paste bubble text" class="w-[15px] flex justify-center"><svg class="size-[10px]"><use href="#paste"/></svg></button>
                <button aria-label="Delete bubble text" class="w-[14px] flex justify-center"><svg class="size-[10px]"><use href="#cross"/></svg></button>
                <span class="w-px h-[11px] bg-[#bdbaa9] mx-0.5"></span>
                <button class="w-[14px] font-bold text-[10px] font-['Liberation_Serif',serif]">A</button>
                <button aria-label="Spacing" class="w-[14px] flex justify-center"><svg class="size-[10px]"><use href="#spacing"/></svg></button>
                <button aria-label="Hyperlink" class="w-[14px] flex justify-center"><svg class="size-[11px]"><use href="#link"/></svg></button>
            </div>
            <div class="h-4 shrink-0 flex items-center font-['Liberation_Serif',serif] text-[9px]">
                <button aria-label="Align left" class="w-[14px] h-[13px] flex items-center justify-center border border-[#8aa6cc] bg-white"><svg class="size-[9px]"><use href="#al"/></svg></button>
                <button aria-label="Align center" class="w-[14px] flex justify-center"><svg class="size-[9px]"><use href="#ac"/></svg></button>
                <button aria-label="Align right" class="w-[15px] flex justify-center"><svg class="size-[9px]"><use href="#ar"/></svg></button>
                <button aria-label="Justify" class="w-[14px] flex justify-center"><svg class="size-[9px]"><use href="#aj"/></svg></button>
                <span class="w-px h-[11px] bg-[#bdbaa9] mx-0.5"></span>
                <button class="w-[14px] font-bold">B</button>
                <button class="w-[14px] font-bold italic">I</button>
                <button class="w-[14px] font-bold underline">U</button>
                <span class="w-px h-[11px] bg-[#bdbaa9] mx-0.5"></span>
                <button class="flex items-center pl-0.5 font-bold">T<svg class="size-[7px]"><use href="#globe"/></svg></button>
            </div>
            <div class="h-[114px] shrink-0 flex mr-1 border-l-2 border-t border-b border-[#85837a] border-b-[#f5f4ee]">
                <textarea aria-label="Bubble text" class="flex-1 resize-none bg-[#e7e4d3] overflow-hidden"></textarea>
                <div class="w-[11px] flex flex-col justify-between bg-[#f2f1e8]">
                    <button aria-label="Text up" class="h-[11px] flex items-center justify-center rounded-xs border border-[#cfccbc] bg-[#ebe9dd] text-[#b9b6a6]"><svg class="size-[7px] rotate-180"><use href="#chev"/></svg></button>
                    <button aria-label="Text down" class="h-[11px] flex items-center justify-center rounded-xs border border-[#cfccbc] bg-[#ebe9dd] text-[#b9b6a6]"><svg class="size-[7px]"><use href="#chev"/></svg></button>
                </div>
            </div>
            <div class="h-[15px] shrink-0 flex items-center gap-px border-b border-[#d3d0bf] text-[#77756c]">
                <button aria-label="Action" class="w-[14px] h-[13px] flex items-center justify-center border border-[#8aa6cc] bg-[#f4f3ec]"><svg class="size-[10px]"><use href="#thumb"/></svg></button>
                <button aria-label="Notes" class="w-[14px] h-[13px] flex items-center justify-center"><svg class="size-[10px]"><use href="#note"/></svg></button>
                <button aria-label="Screen" class="w-[14px] h-[13px] flex items-center justify-center border border-[#8aa6cc] bg-[#f4f3ec]"><svg class="size-[10px]"><use href="#screen"/></svg></button>
                <button aria-label="Bubble" class="w-[14px] h-[13px] flex items-center justify-center border border-[#8aa6cc] bg-[#f4f3ec]"><svg class="size-[10px]"><use href="#bubble"/></svg></button>
                <button aria-label="Template" class="w-[14px] h-[13px] flex items-center justify-center border border-[#8aa6cc] bg-[#f4f3ec]"><svg class="size-[10px]"><use href="#template"/></svg></button>
            </div>
            <div class="h-4 shrink-0 flex items-center">
                <button aria-label="Pointer" class="w-[14px] h-[13px] flex items-center justify-center border border-[#8aa6cc] bg-[#f4f3ec]"><svg class="size-[10px]"><use href="#tag"/></svg></button>
                <button aria-label="List" class="w-[15px] flex justify-center"><svg class="size-[10px]"><use href="#bubble-list"/></svg></button>
                <button aria-label="Icon" class="w-[14px] flex justify-center"><svg class="size-[10px]"><use href="#thumb"/></svg></button>
                <button aria-label="Fill" class="w-[14px] flex justify-center"><svg class="size-[10px]"><use href="#bucket"/></svg></button>
                <span class="w-px h-[11px] bg-[#bdbaa9] mx-0.5"></span>
                <button aria-label="Duplicate" class="w-[14px] flex justify-center"><svg class="size-[10px]"><use href="#stack"/></svg></button>
                <button aria-label="Insert" class="w-[14px] flex justify-center"><svg class="size-[10px]"><use href="#screen"/></svg></button>
                <button aria-label="Page" class="w-[14px] flex justify-center"><svg class="size-[10px]"><use href="#page"/></svg></button>
                <button aria-label="Page down" class="w-[15px] flex justify-center"><svg class="size-[10px]"><use href="#page"/></svg></button>
                <button class="w-[14px] font-bold text-[10px] font-['Liberation_Serif',serif]">A</button>
            </div>
            <div class="h-[18px] shrink-0 flex items-center pl-[3px] pr-1 bg-[#b5cdf5] text-black">
                <label for="showIn" class="w-8">Show in:</label>
                <div class="relative flex-1 h-[13px]">
                    <select id="showIn" class="appearance-none block w-full h-full pl-px bg-white border border-[#8ea9cf] leading-[11px]"><option>See It! / Try It!, Know It?, Do It!</option></select>
                    <span class="absolute right-px top-px w-2 h-[11px] bg-[#bdd1fb] flex items-center justify-center text-[#30508a] pointer-events-none"><svg class="size-[7px]"><use href="#chev"/></svg></span>
                </div>
            </div>
            <form class="flex-1 min-h-0 mr-0.5 border-l border-t border-[#77756c] pl-px pr-[19px] pt-0.5 text-black">
                <div class="flex items-center h-3">
                    <label for="headerText" class="w-[46px]">Header:</label>
                    <input id="headerText" type="text" value="Please make a selection from" class="flex-1 min-w-0 h-3 pl-px bg-white border-l border-t border-[#77756c]">
                </div>
                <p class="pt-1" id="pathLabel">Path list:</p>
                <div class="flex mt-px">
                    <ul role="listbox" aria-labelledby="pathLabel" class="w-[124px] h-[39px] bg-white border-l border-t border-[#77756c] leading-[9px] pt-px whitespace-nowrap">
                        <li role="option" class="pl-px h-2">Rich Text Format</li>
                        <li role="option" aria-selected="true" class="pl-px h-[9px] bg-[#316ac5] text-white">Save the file as a different file type</li>
                    </ul>
                    <div class="flex flex-col justify-between pl-1.5 py-0.5">
                        <button type="button" aria-label="Move up"><svg class="size-[9px]" viewBox="0 0 8 8"><path d="M2 7h2V2M2 3.500L4 1l2 2.500" fill="none" stroke="#2a62d6" stroke-width="1.500"/></svg></button>
                        <button type="button" aria-label="Move down"><svg class="size-[9px]" viewBox="0 0 8 8"><path d="M2 1h2v5M2 4.500L4 7l2-2.500" fill="none" stroke="#9a988c" stroke-width="1.300"/></svg></button>
                    </div>
                </div>
                <div class="flex items-center h-3 mt-[3px]">
                    <label for="delay" class="w-[67px]">Delay time (s):</label>
                    <div class="relative flex-1 h-3">
                        <select id="delay" class="appearance-none block w-full h-full pl-px bg-white border border-[#8d8b80] leading-[10px]"><option>Infinite</option></select>
                        <span class="absolute right-px top-px w-[9px] h-2.5 border border-[#a5a294] bg-[#e7e4d3] flex items-center justify-center pointer-events-none"><svg class="size-[5px]"><use href="#caret"/></svg></span>
                    </div>
                </div>
                <div class="flex items-center gap-1 h-5 pl-0.5 border-b border-[#a5a294]">
                    <button type="button" aria-label="Add path"><svg class="size-[11px]"><use href="#route-add"/></svg></button>
                    <button type="button" aria-label="Swap path"><svg class="size-[10px]"><use href="#route-swap"/></svg></button>
                    <button type="button" aria-label="Remove path"><svg class="size-[11px]"><use href="#route-del"/></svg></button>
                </div>
                <div class="flex items-center mt-[52px] pt-[3px] border-t border-[#a5a294]">
                    <label for="jumpIn" class="w-[67px]"><u>J</u>ump-in point:</label>
                    <input id="jumpIn" type="text" class="flex-1 min-w-0 h-3 bg-white border-l border-t border-[#77756c]">
                </div>
            </form>
        </aside>
    </main>

    <footer class="h-[15px] shrink-0 flex items-center justify-end gap-px border-t border-[#9db9e6] bg-[#e7e4d3]">
        <svg class="size-[11px]"><use href="#online"/></svg>
        <span>Online</span>
        <svg class="size-2 ml-1 self-end" viewBox="0 0 8 8"><path d="M6 2h1M4 4h1M6 4h1M2 6h1M4 6h1M6 6h1" stroke="#a5a294"/></svg>
    </footer>

    <script>
        // frames of the topic: [x, y, letter, fill]
        const nodes = [
            [25, 26, 'S', '#f00'], [50, 26, 'F', '#00f'], [75, 26, 'F', '#00f'], [100, 26, 'D', '#0f0'],
            [125, 26, 'F', '#00f'], [150, 26, 'F', '#00f'], [175, 26, 'E', '#f00'],
            [125, 54, 'F', '#00f'], [150, 54, 'F', '#00f'], [175, 54, 'F', '#00f'], [200, 54, 'F', '#00f'], [225, 54, 'E', '#f00']
        ];
        document.getElementById('structure').innerHTML += nodes.map(([x, y, letter, fill]) =>
            `<circle cx="${x}" cy="${y}" r="6.500" fill="${fill}"/><text x="${x}" y="${y + 3}" fill="${letter === 'D' ? '#000' : '#fff'}">${letter}</text>`
        ).join('');
    </script>
</body>
</html>
